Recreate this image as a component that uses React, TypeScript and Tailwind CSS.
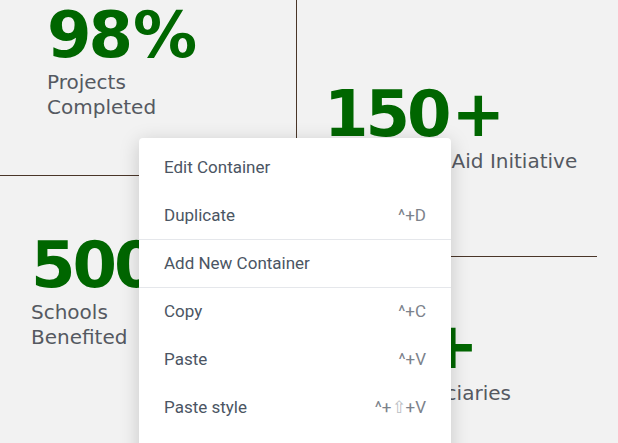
import React from "react";

const numFont = { fontFamily: '"DejaVu Sans", "Open Sans", sans-serif' };
const labelFont = { fontFamily: '"DejaVu Sans", "Open Sans", sans-serif' };

function Stat({ value, suffix, label, className }: { value: string; suffix: string; label: React.ReactNode; className?: string }) {
  return (
    <div className={className}>
      <div className="flex items-start text-[#006600] font-bold leading-none text-[64px] tracking-[-3px]" style={numFont}>
        <span>{value}</span>
        <span className="ml-[3px]">{suffix}</span>
      </div>
      <div className="mt-[3px] whitespace-nowrap text-[20px] leading-[25px] text-[#555961]" style={labelFont}>
        {label}
      </div>
    </div>
  );
}

function Item({ label, shortcut, divider }: { label: string; shortcut?: React.ReactNode; divider?: boolean }) {
  return (
    <div className={`flex h-12 items-center justify-between px-[25px] ${divider ? "border-b border-[#e5e7eb]" : ""}`}>
      <span className="text-[17px] text-[#4b5563]">{label}</span>
      {shortcut && <span className="text-[17px] text-[#7c828b]">{shortcut}</span>}
    </div>
  );
}

export default function App() {
  return (
    <div className="relative h-[443px] w-[618px] overflow-hidden bg-[#f2f2f2]">
      <div className="flex">
        <div className="w-[297px] shrink-0">
          <div className="h-[176px] border-b border-r border-[#4a3629] pl-[47px] pt-[3px]">
            <Stat value="98" suffix="%" label={<>Projects<br />Completed</>} />
          </div>
          <div className="pl-[31px] pt-[57px]">
            <Stat value="500" suffix="+" label={<>Schools<br />Benefited</>} />
          </div>
        </div>
        <div className="w-[300px] shrink-0">
          <div className="h-[257px] border-b border-[#4a3629] pl-[27px] pt-[82px]">
            <Stat value="150" suffix="+" label="Water Relief Aid Initiative" />
          </div>
          <div className="pl-[42px] pt-[57px]">
            <Stat value="80" suffix="+" label="Our Beneficiaries" />
          </div>
        </div>
      </div>

      <div
        className="absolute left-[139px] top-[138px] h-[330px] w-[312px] rounded-[4px] bg-white pt-[6px] shadow-[0_4px_20px_rgba(0,0,0,0.18)]"
        style={{ fontFamily: 'Roboto, "Liberation Sans", sans-serif' }}
      >
        <Item label="Edit Container" />
        <Item label="Duplicate" shortcut="^+D" divider />
        <Item label="Add New Container" divider />
        <Item label="Copy" shortcut="^+C" />
        <Item label="Paste" shortcut="^+V" />
        <Item
          label="Paste style"
          shortcut={
            <>
              ^+<span className="text-[#b8bcc2]">⇧</span>+V
            </>
          }
        />
      </div>
    </div>
  );
}
